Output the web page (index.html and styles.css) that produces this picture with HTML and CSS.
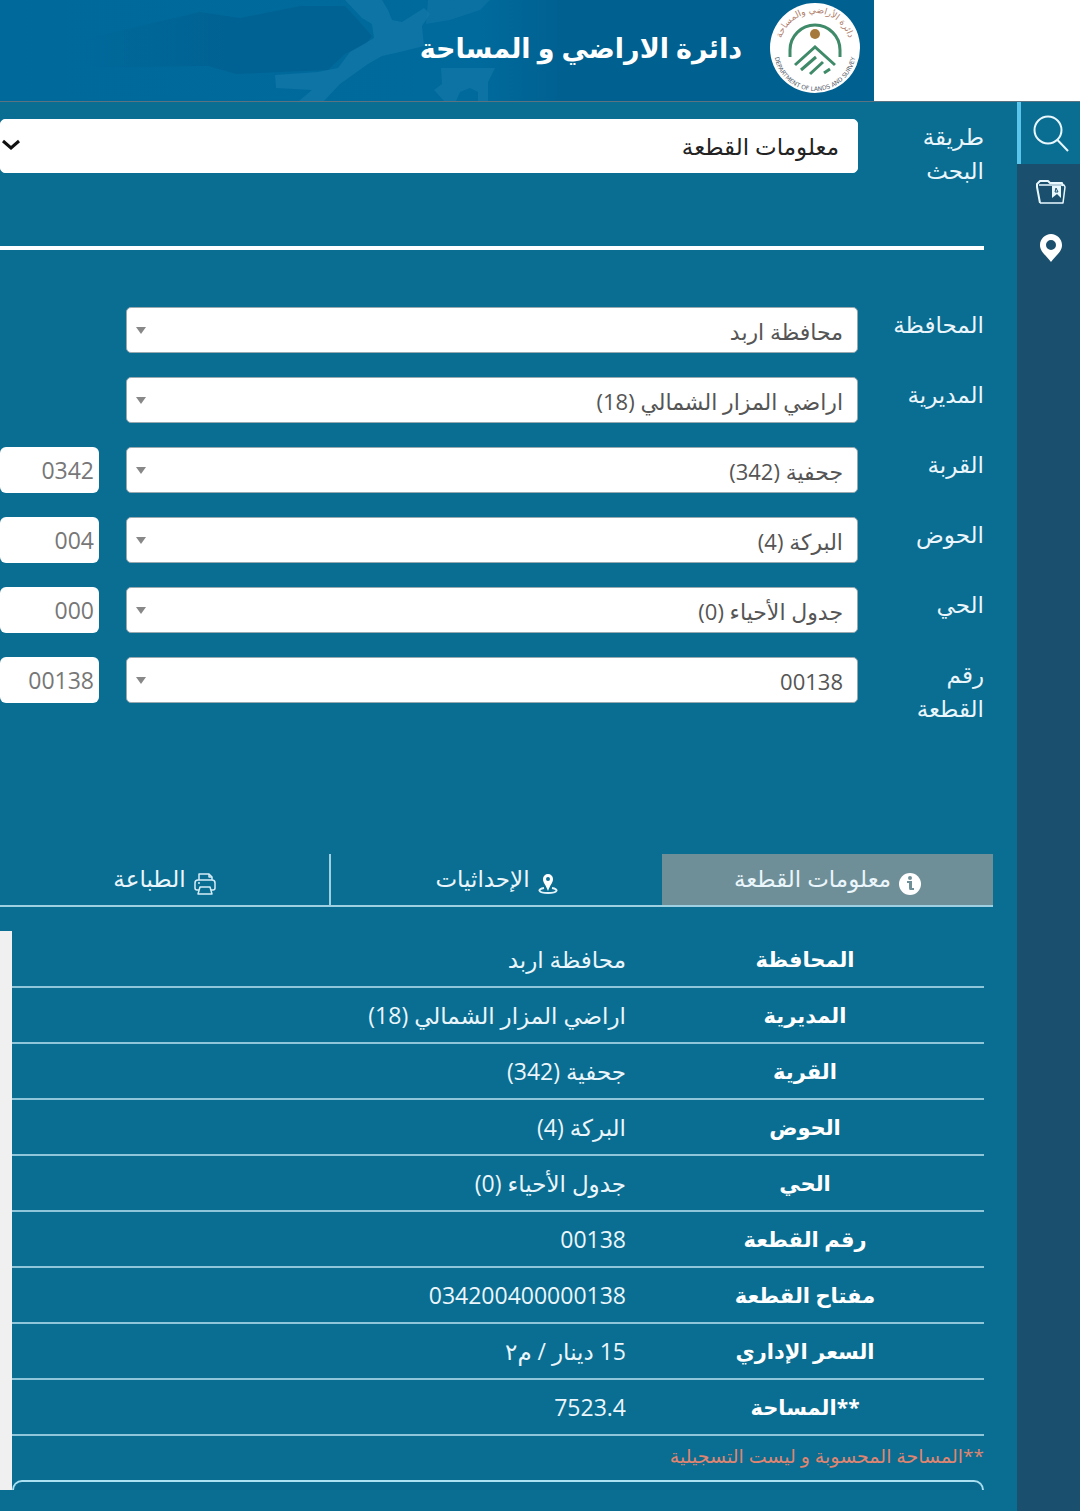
FILE: index.html
```html
<!DOCTYPE html>
<html lang="ar" dir="rtl">
<head>
<meta charset="utf-8">
<meta name="viewport" content="width=device-width, initial-scale=1">
<title>دائرة الاراضي و المساحة</title>
<link rel="stylesheet" href="styles.css">
</head>
<body>
<header class="topbar">
  <div class="banner">
    <svg class="banner-art" viewBox="0 0 874 101" preserveAspectRatio="xMinYMin slice" aria-hidden="true">
      <defs>
        <linearGradient id="sea">
          <stop offset="0" stop-color="#006091" stop-opacity="0"/>
          <stop offset=".5" stop-color="#006091" stop-opacity=".8"/>
        </linearGradient>
      </defs>
      <path fill="url(#sea)" d="M80 40 200 12 240 18 300 6 345 6 358 20 372 36 366 44 345 54 328 70 236 74 208 66 80 68Z"/>
      <path fill="#1679aa" opacity=".65" d="M345 0H382L388 10 392 20 402 22 424 8 430 14 422 26 424 46 400 52 382 56 368 64 340 84 324 101H299L312 90 276 88 275 75 318 72 338 68 350 52 374 38 372 24 362 18Z"/>
      <path fill="#1679aa" opacity=".45" d="M428 0H490L480 10 450 20 426 24Z"/>
      <path fill="#1679aa" opacity=".6" d="M441 68H495L488 82 488 101H478V92L470 88 460 92 456 101H444L434 90 442 84Z"/>
    </svg>
    <svg class="logo" viewBox="770 3 90 90" role="img" aria-label="شعار الدائرة">
      <circle cx="815" cy="48" r="45" fill="#fff"/>
      <defs>
        <path id="ring-top" d="M780 48a35 35 0 0 1 70 0"/>
        <path id="ring-bottom" d="M774 50a41 41 0 0 0 82 0"/>
      </defs>
      <text class="ring ring-ar" text-anchor="middle"><textPath href="#ring-top" startOffset="50%">دائرة الأراضي والمساحة</textPath></text>
      <text class="ring ring-en" direction="ltr" text-anchor="middle"><textPath href="#ring-bottom" startOffset="50%">DEPARTMENT OF LANDS AND SURVEY</textPath></text>
      <g fill="none" stroke="#3f8a68" stroke-width="3">
        <path d="M790 57V50a25 25 0 0 1 50 0V57"/>
        <path d="M795 65 815 47 835 65M801 70 816 57M810 74 823 62M824 73 830 69"/>
      </g>
      <circle cx="815" cy="34" r="5" fill="#a5793c"/>
    </svg>
    <h1 class="title">دائرة الاراضي و المساحة</h1>
  </div>
</header>
<div class="layout">
  <nav class="sidebar" aria-label="القائمة">
    <button class="side-btn side-btn-active" type="button" aria-label="بحث">
      <svg width="38" height="38" viewBox="0 0 38 38" fill="none" stroke="#e9f7ff" stroke-width="2"><circle cx="16" cy="16" r="13.500"/><path d="M25.500 26 36 37"/></svg>
    </button>
    <button class="side-btn" type="button" aria-label="المحفوظات">
      <svg width="30" height="26" viewBox="0 0 30 26" fill="none" stroke="#e9f7ff" stroke-width="2" stroke-linejoin="round"><path d="M4 24 1 8V5L4 2h8l2 2h12l1 3"/><path stroke-width="1.500" d="M3 6h25l1 2-2 16H4"/><path fill="#e9f7ff" stroke="none" d="M16 7h9v12l-4-4-5 4Z"/><path stroke="#1a506e" stroke-width="1" d="m20 9 2 4h-3Z"/></svg>
    </button>
    <button class="side-btn" type="button" aria-label="الموقع">
      <svg width="22" height="28" viewBox="0 0 22 28"><path fill="#fff" fill-rule="evenodd" d="M11 0C5 0 0 5 0 11c0 7 6 10 11 17 5-7 11-10 11-17C22 5 17 0 11 0Zm0 6a5 5 0 1 1 0 10 5 5 0 0 1 0-10Z"/></svg>
    </button>
  </nav>
  <main class="panel">
    <form>
      <div class="row search-row">
        <label class="label" for="method">طريقة البحث</label>
        <div class="pick pick-large">
          <select class="select" id="method"><option>معلومات القطعة</option></select>
          <svg class="chevron" width="18" height="12" viewBox="0 0 18 12" fill="none" stroke="#111" stroke-width="3" aria-hidden="true"><path d="m1 2 8 7 8-7"/></svg>
        </div>
      </div>
      <hr class="divider">
      <div class="fields">
        <div class="row"><label class="label" for="gov">المحافظة</label><div class="pick"><select class="select" id="gov"><option>محافظة اربد</option></select><span class="arrow"></span></div></div>
        <div class="row"><label class="label" for="dir">المديرية</label><div class="pick"><select class="select" id="dir"><option>اراضي المزار الشمالي (18)</option></select><span class="arrow"></span></div></div>
        <div class="row"><label class="label" for="village">القربة</label><div class="pick"><select class="select" id="village"><option>جحفية (342)</option></select><span class="arrow"></span></div><input class="code" type="text" value="0342" aria-label="رمز القرية"></div>
        <div class="row"><label class="label" for="basin">الحوض</label><div class="pick"><select class="select" id="basin"><option>البركة (4)</option></select><span class="arrow"></span></div><input class="code" type="text" value="004" aria-label="رمز الحوض"></div>
        <div class="row"><label class="label" for="block">الحي</label><div class="pick"><select class="select" id="block"><option>جدول الأحياء (0)</option></select><span class="arrow"></span></div><input class="code" type="text" value="000" aria-label="رمز الحي"></div>
        <div class="row"><label class="label" for="parcel">رقم القطعة</label><div class="pick"><select class="select" id="parcel"><option>00138</option></select><span class="arrow"></span></div><input class="code" type="text" value="00138" aria-label="رمز القطعة"></div>
      </div>
    </form>
    <div class="tabs" role="tablist">
      <button class="tab tab-active" type="button" role="tab" aria-selected="true">
        <svg class="tab-icon" width="22" height="22" viewBox="0 0 22 22"><circle cx="11" cy="11" r="11" fill="#fff"/><circle cx="11" cy="5" r="2" fill="#6f8f98"/><path fill="#6f8f98" d="M8 8h5v7h2v2h-4q-1 0-1-2v-5H8Z"/></svg>
        <span>معلومات القطعة</span>
      </button>
      <button class="tab" type="button" role="tab" aria-selected="false">
        <svg class="tab-icon" width="20" height="20" viewBox="0 0 20 20"><path fill="none" stroke="#e3f3fa" stroke-width="2" d="M6 14c-7 1-6 5 4 5s11-4 4-5"/><path fill="#fff" fill-rule="evenodd" d="M10 0a5 5 0 0 0-5 5c0 4 3 6 5 12 2-6 5-8 5-12a5 5 0 0 0-5-5Zm0 3a2 2 0 1 1 0 4 2 2 0 0 1 0-4Z"/></svg>
        <span>الإحداثيات</span>
      </button>
      <button class="tab" type="button" role="tab" aria-selected="false">
        <svg class="tab-icon" width="22" height="22" viewBox="0 0 22 22" fill="none" stroke="#d5edf7" stroke-width="1.500" stroke-linejoin="round"><path d="M5 7V1h10l3 3v3M5 17H3q-2 0-2-2v-5q0-3 3-3h14q3 0 3 3v5q0 2-2 2h-2"/><path d="M6 14h10l2 7H4ZM15 1v3h3M4 10h2"/></svg>
        <span>الطباعة</span>
      </button>
    </div>
    <section class="results">
      <table class="info">
        <tbody>
          <tr><th scope="row">المحافظة</th><td>محافظة اربد</td></tr>
          <tr><th scope="row">المديرية</th><td>اراضي المزار الشمالي (18)</td></tr>
          <tr><th scope="row">القرية</th><td>جحفية (342)</td></tr>
          <tr><th scope="row">الحوض</th><td>البركة (4)</td></tr>
          <tr><th scope="row">الحي</th><td>جدول الأحياء (0)</td></tr>
          <tr><th scope="row">رقم القطعة</th><td>00138</td></tr>
          <tr><th scope="row">مفتاح القطعة</th><td>034200400000138</td></tr>
          <tr><th scope="row">السعر الإداري</th><td>15 دينار / م٢</td></tr>
          <tr><th scope="row">**المساحة</th><td>7523.4</td></tr>
        </tbody>
      </table>
      <p class="note">**المساحة المحسوبة و ليست التسجيلية</p>
      <div class="next-card"></div>
    </section>
  </main>
</div>
</body>
</html>
```
FILE: styles.css
```css
* { box-sizing: border-box; }
body {
  margin: 0;
  background: #0a6d92;
  color: #eaf6fb;
  font-family: "Open Sans", "DejaVu Sans", sans-serif;
  font-size: 23px;
  overflow-x: hidden;
}
button, select, input { font: inherit; }

.topbar {
  background: #fff;
  border-bottom: 1px solid #5c7482;
  padding-right: 206px;
}
.banner {
  position: relative;
  display: flex;
  align-items: center;
  gap: 28px;
  height: 101px;
  padding: 0 14px 6px;
  background: linear-gradient(90deg, #00699b, #006a9c 55%, #006090 65%);
  overflow: hidden;
}
.banner-art { position: absolute; inset: 0; width: 100%; height: 100%; }
.logo { position: relative; width: 90px; height: 90px; flex: none; }
.ring { font-family: "DejaVu Sans", sans-serif; }
.ring-ar { font-size: 9px; fill: #b0806a; }
.ring-en { font-size: 6px; fill: #56606a; }
.title {
  position: relative;
  margin: 0;
  color: #fff;
  font-size: 27px;
  font-weight: 700;
  line-height: 40px;
  white-space: nowrap;
}

.layout { display: flex; min-height: calc(100vh - 102px); }
.sidebar {
  flex: none;
  width: 63px;
  display: flex;
  flex-direction: column;
  background: #1a506e;
}
.side-btn {
  display: grid;
  place-items: center;
  height: 56px;
  padding: 0;
  border: 0;
  border-left: 4px solid transparent;
  background: none;
}
.side-btn-active { height: 62px; border-left-color: #5cc5ec; background: #0a6d92; }

.panel { flex: 1; min-width: 0; padding: 17px 24px 21px 0; }
.row { display: flex; align-items: flex-start; padding-right: 9px; }
.label { flex: none; width: 126px; padding-left: 22px; line-height: 34px; }
.pick { position: relative; flex: 1; height: 46px; }
.select {
  appearance: none;
  display: block;
  width: 100%;
  height: 100%;
  padding: 2px 14px 0;
  border: 1px solid #9aa9b0;
  border-radius: 5px;
  background: #fff;
  color: #555;
  font-size: 22px;
}
.pick-large { height: 54px; }
.pick-large .select { padding: 0 18px; border-color: #fff; color: #222; font-size: 23px; }
.chevron { position: absolute; left: 2px; top: 20px; }
.arrow {
  position: absolute;
  left: 10px;
  top: 20px;
  border: 5px solid transparent;
  border-top: 7px solid #888;
  border-bottom: 0;
}
.divider { height: 4px; margin: 59px 9px 57px 0; border: 0; background: #fff; }
.fields { display: grid; gap: 24px; }
.fields .row { min-height: 46px; }
.fields .pick { margin-left: 126px; }
.fields .pick:not(:last-child) { margin-left: 27px; }
.code {
  flex: none;
  width: 99px;
  height: 46px;
  padding: 0 5px;
  border: 0;
  border-radius: 6px;
  background: #fff;
  color: #777;
}
.fields .row:last-child { min-height: 68px; }

.tabs {
  display: grid;
  grid-template-columns: repeat(3, 1fr);
  margin-top: 129px;
  border-bottom: 2px solid #9fd0e2;
}
.tab {
  display: flex;
  align-items: center;
  justify-content: center;
  gap: 8px;
  height: 51px;
  padding: 0 0 4px;
  border: 0;
  background: none;
  color: #eaf6fb;
}
.tab-active { background: #6f8f98; }
.tab + .tab + .tab { border-right: 2px solid #9fd0e2; }
.tab-icon { flex: none; margin-top: 12px; }

.results {
  margin: 24px 9px 0 0;
  border-left: 12px solid #f0f0f0;
}
.info { width: 100%; border-collapse: collapse; table-layout: fixed; }
.info th, .info td { height: 56px; padding: 0; border-bottom: 2px solid #8fc6da; }
.info th { width: 358px; text-align: center; font-size: 21px; font-weight: 700; color: #fff; }
.info td { text-align: right; }
.note { margin: 0 0 4px; color: #df8571; font-size: 19px; line-height: 40px; }
.next-card {
  height: 10px;
  border: 2px solid #a9dff0;
  border-width: 2px 2px 0;
  border-radius: 12px 12px 0 0;
  background: #08688d;
}
```
